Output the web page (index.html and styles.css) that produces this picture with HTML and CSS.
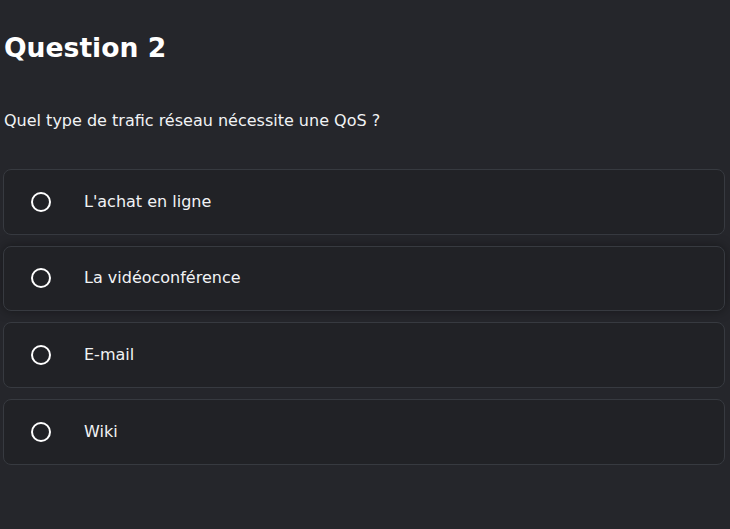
FILE: index.html
```html
<!DOCTYPE html>
<html lang="fr">
<head>
<meta charset="utf-8">
<title>Question 2</title>
<link rel="stylesheet" href="styles.css">
</head>
<body>
<main class="quiz">
  <h2 class="title">Question 2</h2>
  <p class="prompt">Quel type de trafic réseau nécessite une QoS ?</p>
  <div class="options">
    <label class="option"><span class="radio"></span><span class="label">L'achat en ligne</span></label>
    <label class="option hover"><span class="radio"></span><span class="label">La vidéoconférence</span></label>
    <label class="option"><span class="radio"></span><span class="label">E-mail</span></label>
    <label class="option"><span class="radio"></span><span class="label">Wiki</span></label>
  </div>
</main>
</body>
</html>
```
FILE: styles.css
```css
html, body {
  margin: 0;
  padding: 0;
  background: #25262b;
  height: 100%;
}
body {
  font-family: "DejaVu Sans", "Liberation Sans", sans-serif;
  color: #ffffff;
}
.quiz {
  padding: 30px 5px 0 3px;
}
.title {
  margin: 0 0 0 1px;
  font-size: 26.6px;
  line-height: 35px;
  font-weight: 700;
}
.prompt {
  margin: 44px 0 0 1px;
  font-size: 16px;
  line-height: 24px;
  color: #f1f3f5;
}
.options {
  margin-top: 36px;
  display: flex;
  flex-direction: column;
  gap: 11px;
}
.option {
  display: flex;
  align-items: center;
  height: 65.67px;
  box-sizing: border-box;
  border: 1px solid #373a40;
  border-radius: 8px;
  background: #212226;
  padding-left: 27px;
}
.option.hover {
  box-shadow: 0 0 12px rgba(0, 0, 0, 0.4);
}
.radio {
  width: 20px;
  height: 20px;
  box-sizing: border-box;
  border: 2px solid #ffffff;
  border-radius: 50%;
  flex: none;
}
.label {
  margin-left: 33px;
  font-size: 16px;
  line-height: 24px;
  color: #f1f3f5;
}
```
